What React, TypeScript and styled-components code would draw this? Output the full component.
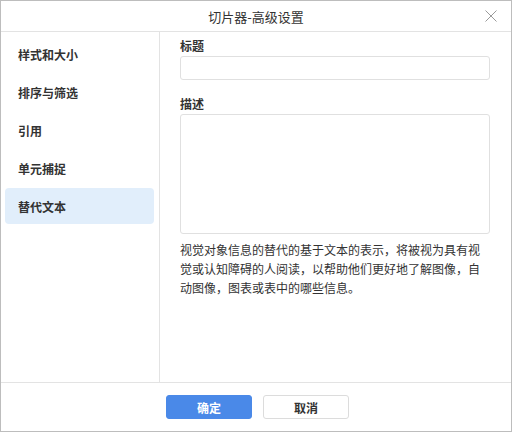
import React from "react";
import styled, { createGlobalStyle } from "styled-components";

const Global = createGlobalStyle`
  html, body { margin: 0; padding: 0; background: #fff; }
  body { font-family: "Noto Sans CJK SC", "Liberation Sans", sans-serif; color: #333; }
  * { box-sizing: border-box; }
`;

const Dialog = styled.div`
  width: 512px;
  height: 432px;
  border: 1px solid #bdbdbd;
  display: flex;
  flex-direction: column;
  background: #fff;
`;

const Header = styled.div`
  height: 31px;
  flex: none;
  border-bottom: 1px solid #e3e3e3;
  display: flex;
  align-items: center;
  justify-content: center;
  position: relative;
  font-size: 13px;
  color: #333;
`;

const Close = styled.button`
  position: absolute;
  right: 12px;
  top: 7px;
  width: 16px;
  height: 16px;
  padding: 0;
  border: none;
  background: none;
  display: flex;
`;

const Body = styled.div`
  flex: 1;
  display: flex;
  min-height: 0;
`;

const Sidebar = styled.div`
  width: 159px;
  flex: none;
  border-right: 1px solid #e3e3e3;
  padding: 4px 5px 0 4px;
  display: flex;
  flex-direction: column;
  gap: 2px;
`;

const NavItem = styled.div<{ $active?: boolean }>`
  height: 36px;
  display: flex;
  align-items: center;
  padding-left: 13px;
  border-radius: 4px;
  font-size: 12px;
  font-weight: bold;
  color: #333;
  background: ${(p) => (p.$active ? "#e1eefb" : "transparent")};
`;

const Content = styled.div`
  flex: 1;
  padding: 5px 21px 0 20px;
  display: flex;
  flex-direction: column;
`;

const Label = styled.div<{ $top?: number }>`
  font-size: 12px;
  font-weight: bold;
  color: #333;
  line-height: 17px;
  margin-top: ${(p) => p.$top ?? 0}px;
  margin-bottom: 2px;
`;

const Input = styled.div`
  height: 24px;
  border: 1px solid #e0e0e0;
  border-radius: 3px;
`;

const TextArea = styled.div`
  height: 120px;
  border: 1px solid #e0e0e0;
  border-radius: 3px;
`;

const Help = styled.p`
  margin: 6px 0 0;
  font-size: 12px;
  line-height: 19px;
  color: #333;
`;

const Footer = styled.div`
  height: 49px;
  flex: none;
  border-top: 1px solid #e3e3e3;
  display: flex;
  align-items: center;
  justify-content: center;
  gap: 11px;
  padding-left: 3px;
`;

const Button = styled.button<{ $primary?: boolean }>`
  width: 86px;
  height: 24px;
  border-radius: 3px;
  font-family: inherit;
  font-size: 12px;
  font-weight: bold;
  border: 1px solid ${(p) => (p.$primary ? "#4a89e8" : "#dcdcdc")};
  background: ${(p) => (p.$primary ? "#4a89e8" : "#fff")};
  color: ${(p) => (p.$primary ? "#fff" : "#333")};
  padding: 0;
`;

export default function App() {
  const items = ["样式和大小", "排序与筛选", "引用", "单元捕捉", "替代文本"];
  return (
    <>
      <Global />
      <Dialog>
        <Header>
          切片器-高级设置
          <Close aria-label="close">
            <svg width="16" height="16" viewBox="0 0 16 16">
              <path d="M2.5 2.5 L13.5 13.5 M13.5 2.5 L2.5 13.5" stroke="#9a9a9a" strokeWidth="1" fill="none" />
            </svg>
          </Close>
        </Header>
        <Body>
          <Sidebar>
            {items.map((t, i) => (
              <NavItem key={t} $active={i === 4}>{t}</NavItem>
            ))}
          </Sidebar>
          <Content>
            <Label>标题</Label>
            <Input />
            <Label $top={15}>描述</Label>
            <TextArea />
            <Help>
              视觉对象信息的替代的基于文本的表示，将被视为具有视觉或认知障碍的人阅读，以帮助他们更好地了解图像，自动图像，图表或表中的哪些信息。
            </Help>
          </Content>
        </Body>
        <Footer>
          <Button $primary>确定</Button>
          <Button>取消</Button>
        </Footer>
      </Dialog>
    </>
  );
}
